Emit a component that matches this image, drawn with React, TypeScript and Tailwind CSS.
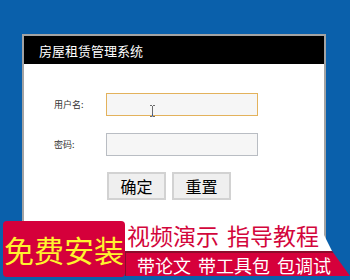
import React from "react";

export default function App() {
  return (
    <div className="relative w-[350px] h-[280px] overflow-hidden bg-[#0a60ab] pt-[34px] pl-[22px] font-['Noto_Sans_CJK_SC','Noto_Sans',sans-serif]">
      <div className="w-[304px] h-[230px] border-2 border-[#a3a3a3] bg-white">
        <div className="h-[28px] bg-black text-white text-[13px] pl-[15px] flex items-center leading-none">
          房屋租赁管理系统
        </div>
        <div className="flex flex-col pt-[29px] pl-[30px]">
          <div className="flex items-center h-[23px]">
            <div className="w-[52px] text-[9px] text-[#333] leading-none">用户名:</div>
            <div className="relative w-[152px] h-[23px] border border-[#e3b25c] bg-[#f6f6f6]">
              <svg className="absolute left-[42px] top-[11px]" width="7" height="12" viewBox="0 0 7 12">
                <path d="M1 0.5h2M4 0.5h2M3.5 1v10M1 11.5h2M4 11.5h2" stroke="#6b6b6b" strokeWidth="1" fill="none" />
                <path d="M3.5 9v2.5" stroke="#3a5a9a" strokeWidth="1" />
              </svg>
            </div>
          </div>
          <div className="flex items-center h-[23px] mt-[17px]">
            <div className="w-[52px] text-[9px] text-[#333] leading-none">密码:</div>
            <div className="w-[152px] h-[23px] border border-[#b9bdc3] bg-[#f6f6f6]" />
          </div>
          <div className="flex gap-[6px] mt-[16px] ml-[53px]">
            <div className="w-[59px] h-[28px] border-2 border-[#d2d2d2] bg-[#efefef] flex items-center justify-center text-[16px] text-black leading-none">
              确定
            </div>
            <div className="w-[59px] h-[28px] border-2 border-[#d2d2d2] bg-[#efefef] flex items-center justify-center text-[16px] text-black leading-none">
              重置
            </div>
          </div>
        </div>
      </div>

      <div className="absolute left-0 top-[221px] w-[350px] h-[59px]">
        <div className="absolute left-[125px] top-[12px] w-[207px] h-[18px] bg-white [clip-path:polygon(0_0,198px_0,100%_100%,0_100%)]" />
        <div className="absolute left-[127px] top-[3px] flex gap-[8px] text-[23px] leading-[23px] text-[#d3063c] whitespace-nowrap">
          <span>视频演示</span>
          <span>指导教程</span>
        </div>
        <div className="absolute left-[125px] top-[30px] w-[225px] h-[25px] bg-[#d6003b] border-t-2 border-l border-[#8c0b2b] [clip-path:polygon(0_0,207px_0,100%_100%,0_100%)] flex items-center pl-[11px] gap-[7px] text-white text-[18px] leading-none whitespace-nowrap">
          <span>带论文</span>
          <span>带工具包</span>
          <span>包调试</span>
        </div>
        <div className="absolute left-[3px] top-0 w-[122px] h-[56px] rounded-[4px] bg-[#d5003b] flex items-center justify-center text-[30px] leading-none text-[#fff42e] whitespace-nowrap">
          免费安装
        </div>
      </div>
    </div>
  );
}
